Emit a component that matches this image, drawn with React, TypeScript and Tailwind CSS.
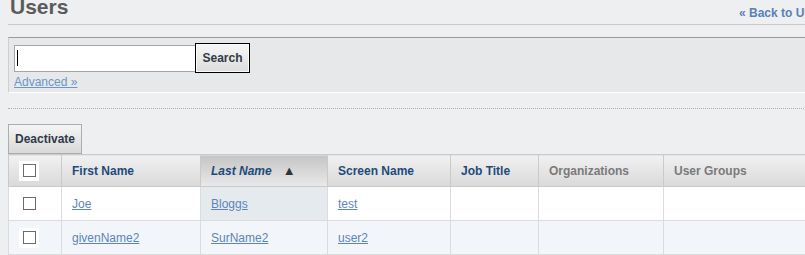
import React from 'react';

const cols = [
    { label: 'First Name', w: 'w-[139px]', tone: 'text-[#1d4b7b]' },
    { label: 'Last Name', w: 'w-[127px]', tone: 'text-[#1d4b7b]', sorted: true },
    { label: 'Screen Name', w: 'w-[123px]', tone: 'text-[#1d4b7b]' },
    { label: 'Job Title', w: 'w-[88px]', tone: 'text-[#1d4b7b]' },
    { label: 'Organizations', w: 'w-[125px]', tone: 'text-[#7a7a7a]' },
    { label: 'User Groups', w: 'w-[200px]', tone: 'text-[#7a7a7a]' },
];

const rows = [
    { first: 'Joe', last: 'Bloggs', screen: 'test' },
    { first: 'givenName2', last: 'SurName2', screen: 'user2' },
];

const Box: React.FC<{ framed?: boolean }> = ({ framed }) => (
    <div className={`w-[20px] h-[20px] flex items-center justify-center ${framed ? 'bg-white' : ''}`}>
        <div className="w-[13px] h-[13px] border border-[#6b6b6b] bg-white" />
    </div>
);

export default function App() {
    return (
        <div className="w-[805px] h-[255px] overflow-hidden bg-[#eeeff1] font-['Liberation_Sans',Arial,sans-serif] text-[12px]">
            <div className="w-[900px] pl-[8px]">

                {/* Title */}
                <div className="h-[25px] flex items-start justify-between border-b border-[#c9c9c9] pr-[71px]">
                    <h1 className="ml-[2px] -mt-[4px] text-[21px] leading-[22px] font-bold text-[#5b5b5b]">Users</h1>
                    <a className="mt-[6px] text-[12px] leading-[14px] font-bold text-[#5782b8]">« Back to Users</a>
                </div>

                {/* Search */}
                <div className="mt-[12px] h-[56px] bg-[#e7e8ea] border-t border-[#9a9a9a] border-l border-l-[#cfcfcf] border-b border-b-white pl-[5px] pt-[5px]">
                    <div className="flex items-center">
                        <div className="w-[182px] h-[27px] bg-white border border-[#a5a5a5] flex items-center pl-[2px]">
                            <div className="w-[1px] h-[16px] bg-black" />
                        </div>
                        <button className="-ml-[1px] w-[55px] h-[30px] border border-black bg-gradient-to-b from-[#f7f7f7] to-[#dcdcdc] font-bold text-[#333a45] shadow-[inset_0_0_0_1px_#fafafa]">
                            Search
                        </button>
                    </div>
                    <a className="block mt-[2px] leading-[14px] text-[#6c95c8] underline">Advanced »</a>
                </div>

                <div className="mt-[15px] border-t border-dotted border-[#b0b0b0]" />

                {/* Actions */}
                <button className="mt-[15px] h-[30px] px-[6px] border border-[#adadad] bg-gradient-to-b from-[#f5f5f5] to-[#d9d9d9] font-bold text-[#2f3a48] flex items-center">
                    Deactivate
                </button>

                {/* Users table */}
                <table className="border-collapse table-fixed">
                    <thead>
                        <tr className="h-[32px]">
                            <th className="w-[53px] border border-[#cacaca] bg-gradient-to-b from-[#f1f1f1] to-[#d9d9d9] p-0 pl-[10px]">
                                <Box framed />
                            </th>
                            {cols.map((c) => (
                                <th
                                    key={c.label}
                                    className={`${c.w} border border-[#cacaca] p-0 pl-[10px] text-left font-bold ${c.tone} ${c.sorted ? 'bg-gradient-to-b from-[#c5c5c5] to-[#e9e9e9] italic' : 'bg-gradient-to-b from-[#f1f1f1] to-[#d9d9d9]'}`}
                                >
                                    {c.label}
                                    {c.sorted && <span className="ml-[11px] not-italic text-[13px] text-[#333]">▲</span>}
                                </th>
                            ))}
                        </tr>
                    </thead>
                    <tbody>
                        {rows.map((r, i) => (
                            <tr key={r.first} className={`h-[34px] ${i === 0 ? 'bg-white' : 'bg-[#f2f5f9]'}`}>
                                <td className="border border-[#dcdcdc] p-0 pl-[10px]">
                                    <Box framed={i === 1} />
                                </td>
                                <td className="border border-[#dcdcdc] p-0 pl-[10px]"><a className="text-[#5a86bb] underline">{r.first}</a></td>
                                <td className={`border border-[#dcdcdc] p-0 pl-[10px] ${i === 0 ? 'bg-[#e5eaee]' : ''}`}><a className="text-[#5a86bb] underline">{r.last}</a></td>
                                <td className="border border-[#dcdcdc] p-0 pl-[10px]"><a className="text-[#5a86bb] underline">{r.screen}</a></td>
                                <td className="border border-[#dcdcdc] p-0" />
                                <td className="border border-[#dcdcdc] p-0" />
                                <td className="border border-[#dcdcdc] p-0" />
                            </tr>
                        ))}
                    </tbody>
                </table>

            </div>
        </div>
    );
}
